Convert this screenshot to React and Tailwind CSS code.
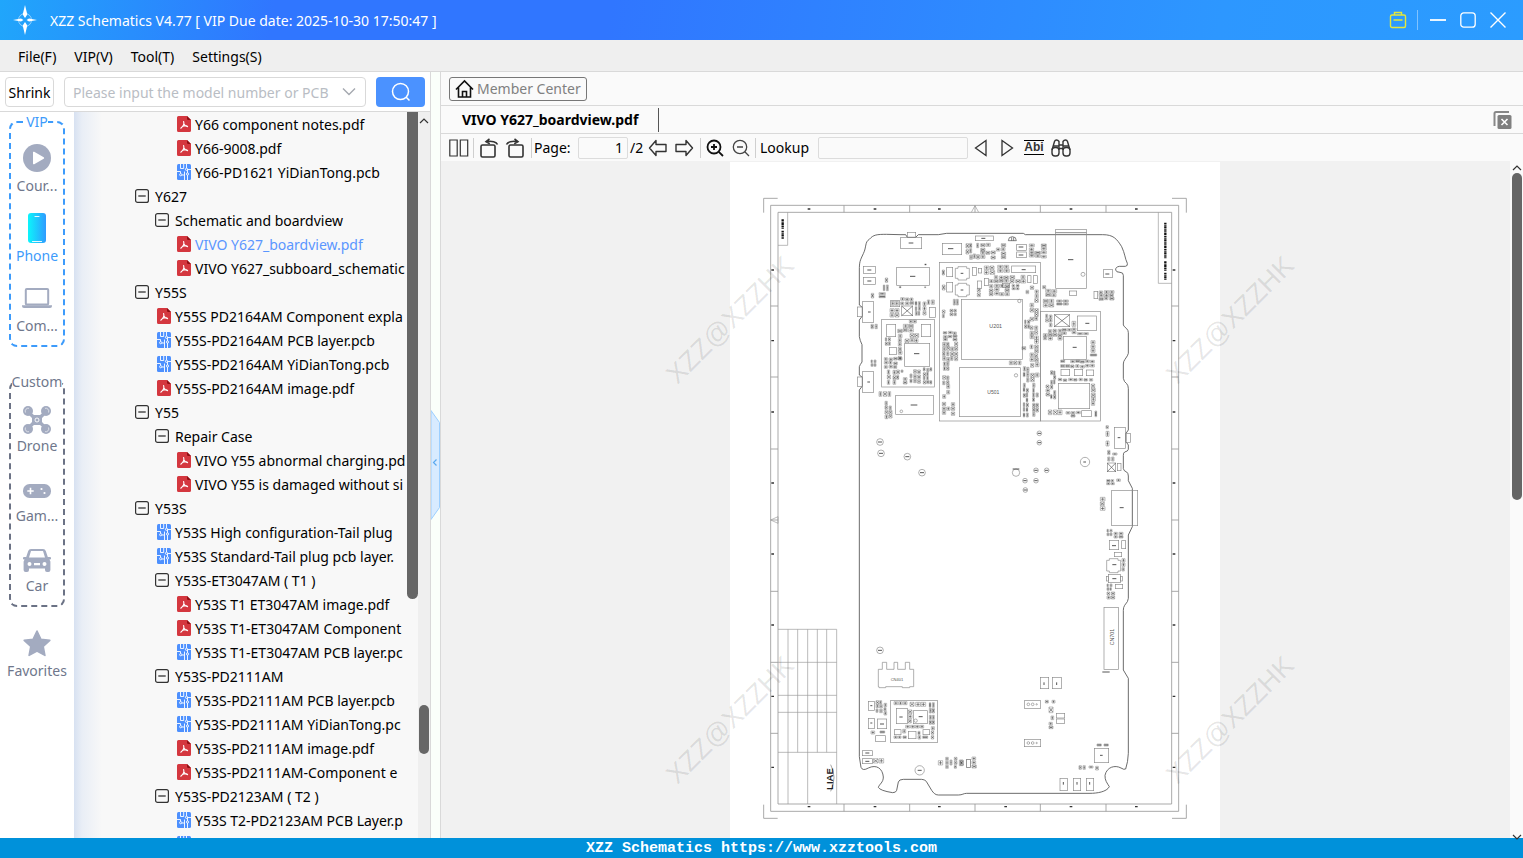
import { useState } from "react";

const menus = ["File(F)", "VIP(V)", "Tool(T)", "Settings(S)"];

// t: "dir" folder, "pdf" or "pcb" file. l: depth in the tree
const rows = [
  { t: "pdf", l: 3, name: "Y66 component notes.pdf" },
  { t: "pdf", l: 3, name: "Y66-9008.pdf" },
  { t: "pcb", l: 3, name: "Y66-PD1621 YiDianTong.pcb" },
  { t: "dir", l: 1, name: "Y627" },
  { t: "dir", l: 2, name: "Schematic and boardview" },
  { t: "pdf", l: 3, name: "VIVO Y627_boardview.pdf" },
  { t: "pdf", l: 3, name: "VIVO Y627_subboard_schematic" },
  { t: "dir", l: 1, name: "Y55S" },
  { t: "pdf", l: 2, name: "Y55S PD2164AM Component expla" },
  { t: "pcb", l: 2, name: "Y55S-PD2164AM PCB layer.pcb" },
  { t: "pcb", l: 2, name: "Y55S-PD2164AM YiDianTong.pcb" },
  { t: "pdf", l: 2, name: "Y55S-PD2164AM image.pdf" },
  { t: "dir", l: 1, name: "Y55" },
  { t: "dir", l: 2, name: "Repair Case" },
  { t: "pdf", l: 3, name: "VIVO Y55 abnormal charging.pd" },
  { t: "pdf", l: 3, name: "VIVO Y55 is damaged without si" },
  { t: "dir", l: 1, name: "Y53S" },
  { t: "pcb", l: 2, name: "Y53S High configuration-Tail plug" },
  { t: "pcb", l: 2, name: "Y53S Standard-Tail plug pcb layer." },
  { t: "dir", l: 2, name: "Y53S-ET3047AM ( T1 )" },
  { t: "pdf", l: 3, name: "Y53S T1 ET3047AM image.pdf" },
  { t: "pdf", l: 3, name: "Y53S T1-ET3047AM Component" },
  { t: "pcb", l: 3, name: "Y53S T1-ET3047AM PCB layer.pc" },
  { t: "dir", l: 2, name: "Y53S-PD2111AM" },
  { t: "pcb", l: 3, name: "Y53S-PD2111AM PCB layer.pcb" },
  { t: "pcb", l: 3, name: "Y53S-PD2111AM YiDianTong.pc" },
  { t: "pdf", l: 3, name: "Y53S-PD2111AM image.pdf" },
  { t: "pdf", l: 3, name: "Y53S-PD2111AM-Component e" },
  { t: "dir", l: 2, name: "Y53S-PD2123AM ( T2 )" },
  { t: "pcb", l: 3, name: "Y53S T2-PD2123AM PCB Layer.p" },
  { t: "pcb", l: 3, name: "" },
];

function PdfIcon() {
  return (
    <svg width="14" height="16" viewBox="0 0 14 16">
      <path d="M1.500 0H10l4 4v10.500a1.500 1.500 0 0 1-1.500 1.500h-11A1.500 1.500 0 0 1 0 14.500v-13A1.500 1.500 0 0 1 1.500 0z" fill="#d4373f" />
      <path d="M10 0l4 4h-2.800A1.200 1.200 0 0 1 10 2.800z" fill="#8f0f14" />
      <path d="M6.600 5.500c.8 2.200.4 4.200-2.800 6.700M6.900 8c.8 1.500 1.700 2.200 3.700 2.600M5.300 10.500c1.700-.8 2.800-.9 4.600-.6" fill="none" stroke="#fff" strokeWidth="1.100" strokeLinecap="round" />
    </svg>
  );
}

function PcbIcon() {
  return (
    <svg width="14" height="16" viewBox="0 0 14 16">
      <rect width="14" height="16" rx="1.500" fill="#4d90fe" />
      <g fill="none" stroke="#fff" strokeWidth=".9">
        <path d="M3.500 0v4.500h3.200V0M9.500 0v4M0 7.500h3.500v2M14 5.500h-3.300M5 11h2.500V7.500M7.500 16V11M10.500 16v-5M10.500 9V5.500" />
        <circle cx="9.500" cy="5.300" r="1.100" />
        <circle cx="3.700" cy="10.700" r="1.100" />
        <circle cx="10.500" cy="10" r="1.100" />
      </g>
    </svg>
  );
}

function MinusBox() {
  return (
    <svg width="14" height="14" viewBox="0 0 14 14" fill="none" stroke="#333">
      <rect x=".6" y=".6" width="12.800" height="12.800" rx="2" strokeWidth="1.200" />
      <path d="M3.300 7h7.400" strokeWidth="1.300" />
    </svg>
  );
}

function TreeRow({ row, active, onPick }) {
  const pad = { 1: "pl-[61px]", 2: "pl-[81px]", 3: "pl-[101px]" }[row.l];
  return (
    <li className="h-6 shrink-0">
      <button
        type="button"
        aria-label={row.name || "File"}
        onClick={onPick}
        className={`flex h-6 items-center whitespace-nowrap ${pad} ${active ? "text-[#5b96ff]" : "text-black"}`}
      >
        <span className={`w-5 shrink-0 ${row.t === "dir" ? "" : "pl-0.5"}`}>
          {row.t === "dir" && <MinusBox />}
          {row.t === "pdf" && <PdfIcon />}
          {row.t === "pcb" && <PcbIcon />}
        </span>
        <span className="pt-0.5">{row.name}</span>
      </button>
    </li>
  );
}

const catIcons = {
  course: (
    <svg width="28" height="28" viewBox="0 0 28 28">
      <circle cx="14" cy="14" r="14" fill="#a3abc0" />
      <path d="M10 8.500v11a.8.8 0 0 0 1.200.7l9.500-5.500a.8.8 0 0 0 0-1.400l-9.500-5.500a.8.8 0 0 0-1.200.7z" fill="#fff" />
    </svg>
  ),
  phone: (
    <svg width="18" height="30" viewBox="0 0 18 30">
      <defs>
        <linearGradient id="ph" x1="0" x2="1">
          <stop offset="0" stopColor="#0cf5fb" />
          <stop offset="1" stopColor="#2f9bff" />
        </linearGradient>
      </defs>
      <rect width="18" height="30" rx="3" fill="url(#ph)" />
      <path d="M7 3.500h4M4.500 28.500h9" stroke="#fff" strokeWidth="1.200" strokeLinecap="round" opacity=".9" />
    </svg>
  ),
  computer: (
    <svg width="30" height="20" viewBox="0 0 30 20">
      <rect x="3.800" y="1" width="22.400" height="15.500" rx="1" fill="none" stroke="#a3abc0" strokeWidth="2" />
      <path d="M0 17.200h30v.8a2 2 0 0 1-2 2H2a2 2 0 0 1-2-2z" fill="#a3abc0" />
    </svg>
  ),
  drone: (
    <svg width="28" height="28" viewBox="0 0 28 28">
      <g fill="#a3abc0">
        <circle cx="5" cy="5" r="5" />
        <circle cx="23" cy="5" r="5" />
        <circle cx="5" cy="23" r="5" />
        <circle cx="23" cy="23" r="5" />
        <path d="M5 4l6 5h6l6-5 2 2-6 6v4l6 6-2 2-6-5h-6l-6 5-2-2 6-6v-4L3 6z" />
      </g>
      <g fill="none" stroke="#fff" strokeWidth=".6">
        <path d="M2.500 6.500A3 3 0 0 1 6 2.300M25.500 6.500A3 3 0 0 0 22 2.300M2.500 21.500A3 3 0 0 0 6 25.700M25.500 21.500A3 3 0 0 1 22 25.700" />
      </g>
      <circle cx="14" cy="14" r="2" fill="none" stroke="#fff" strokeWidth=".9" />
    </svg>
  ),
  game: (
    <svg width="28" height="16" viewBox="0 0 28 16">
      <rect y="2" width="28" height="14" rx="6.500" fill="#a3abc0" />
      <path d="M7.500 5.800v6.400M4.300 9h6.400" stroke="#fff" strokeWidth="1.600" />
      <circle cx="18.500" cy="7" r="1.100" fill="#fff" />
      <circle cx="21.500" cy="11" r="1.100" fill="#fff" />
    </svg>
  ),
  car: (
    <svg width="28" height="23" viewBox="0 0 28 23">
      <path
        fillRule="evenodd"
        fill="#a3abc0"
        d="M8 0h12a3 3 0 0 1 2.800 2l2 6H27a1 1 0 0 1 0 2.500h-.6l1 2V21a2 2 0 0 1-2 2H24a2 2 0 0 1-2-2v-1.500H6V21a2 2 0 0 1-2 2H2.600a2 2 0 0 1-2-2v-8.500l1-2H1A1 1 0 0 1 1 8h2.200l2-6A3 3 0 0 1 8 0zM8 2L6 8.500h16L20 2zM6.500 13a2 2 0 1 0 0 4 2 2 0 0 0 0-4zm15 0a2 2 0 1 0 0 4 2 2 0 0 0 0-4zM11 14v2.300h6V14z"
      />
    </svg>
  ),
  star: (
    <svg width="28" height="27" viewBox="0 0 28 27">
      <path
        d="M14 1l3.800 8.200 9 1.100-6.600 6.200 1.700 8.900L14 21.100l-7.900 4.300 1.700-8.900-6.600-6.200 9-1.100z"
        fill="#a3abc0"
        stroke="#a3abc0"
        strokeWidth="1.600"
        strokeLinejoin="round"
      />
    </svg>
  ),
};

function Category({ icon, label, active, tight }) {
  return (
    <button type="button" className={`flex w-full flex-col items-center ${active ? "text-[#3d9bfb]" : "text-[#6f778c]"}`}>
      <span className="flex h-7 items-center justify-center">{catIcons[icon]}</span>
      <span className={`leading-5 ${tight ? "mt-0.5" : "mt-1"}`}>{label}</span>
    </button>
  );
}

// Sheet is drawn with three units to the pixel
const chipAreas = [
  // left block
  [0, 84, [
    [466, 264, 12, 16], [460, 285, 18, 20], [424, 310, 12, 17], [447, 308, 22, 18], [556, 333, 18, 46], [579, 336, 12, 42],
    [592, 330, 24, 16], [480, 356, 30, 28], [484, 334, 24, 15], [512, 322, 42, 22], [423, 403, 24, 16], [423, 510, 18, 22], [503, 402, 50, 26],
    [538, 390, 24, 12], [505, 430, 14, 80], [525, 430, 44, 28], [466, 443, 18, 26], [463, 502, 56, 34],
    [472, 540, 12, 46], [489, 540, 22, 46], [513, 540, 11, 10], [520, 563, 14, 22], [540, 538, 34, 42],
    [580, 532, 30, 50], [447, 605, 40, 17], [465, 632, 24, 54], [508, 290, 8, 6], [584, 222, 8, 6], [584, 290, 8, 6],
  ]],
  // top and middle shields
  [600, 174, [
    [108, 70, 42, 48], [152, 70, 78, 46], [298, 70, 54, 44], [37, 150, 11, 18], [37, 195, 11, 18], [163, 138, 34, 28],
    [203, 136, 38, 24], [178, 166, 60, 24], [240, 164, 50, 26], [142, 205, 12, 28], [178, 192, 62, 36], [246, 194, 26, 18],
    [288, 196, 40, 38], [300, 236, 28, 190], [284, 300, 18, 28], [276, 380, 16, 12], [302, 428, 28, 60], [238, 423, 40, 14], [280, 440, 20, 48],
    [280, 488, 18, 104], [308, 488, 20, 104], [70, 238, 18, 20], [60, 268, 24, 22], [37, 270, 11, 26], [40, 334, 44, 30], [38, 364, 48, 60],
    [40, 426, 20, 28], [38, 467, 24, 68], [37, 546, 40, 40], [338, 197, 12, 12], [347, 208, 54, 24], [340, 238, 36, 26], [380, 240, 38, 18],
    [507, 210, 48, 32], [347, 283, 22, 38], [340, 326, 58, 36], [397, 324, 44, 20], [426, 304, 14, 18], [442, 338, 38, 9],
    [483, 362, 15, 38], [481, 402, 22, 9], [392, 420, 104, 10], [392, 433, 104, 11], [385, 474, 108, 10], [362, 450, 18, 88],
    [348, 495, 14, 36], [484, 490, 15, 68], [355, 570, 44, 17], [408, 573, 46, 20], [495, 573, 8, 20],
  ]],
  // right edge
  [690, 744, [
    [438, 47, 12, 12], [438, 64, 12, 18], [438, 93, 12, 18], [443, 121, 12, 16], [458, 129, 16, 9], [443, 141, 24, 15],
    [440, 209, 26, 18], [470, 207, 16, 10], [421, 262, 17, 42], [441, 358, 18, 22], [462, 367, 30, 20], [486, 446, 12, 40],
    [441, 522, 18, 22], [441, 546, 26, 24],
  ]],
  // bottom left
  [0, 1344, [
    [438, 270, 22, 50], [462, 280, 11, 38], [423, 363, 16, 12], [450, 363, 17, 9], [492, 275, 42, 12], [540, 277, 50, 15],
    [598, 278, 18, 34], [598, 316, 18, 30], [604, 350, 12, 40], [535, 300, 14, 42], [527, 346, 58, 11], [492, 378, 40, 10],
    [518, 358, 12, 14], [564, 364, 11, 26], [578, 378, 20, 10], [430, 446, 34, 16], [625, 452, 18, 16], [647, 442, 11, 36],
    [660, 450, 11, 18], [673, 442, 11, 36], [688, 450, 14, 20],
  ]],
  // bottom right
  [690, 1464, [
    [256, 151, 14, 11], [276, 151, 12, 11], [267, 171, 15, 20], [273, 198, 11, 14], [267, 217, 15, 22], [411, 282, 16, 9],
    [432, 282, 16, 9], [357, 347, 24, 14], [387, 348, 15, 9], [407, 349, 11, 14], [0, 331, 13, 18], [36, 321, 16, 36],
  ]],
];

function buildChips() {
  let seed = 7;
  const rnd = () => {
    seed = (seed * 16807) % 2147483647;
    return seed / 2147483647;
  };
  let frames = "";
  let fills = "";
  chipAreas.forEach(([ox, oy, areas]) => {
    areas.forEach(([ax, ay, w, h]) => {
      const tall = w < h;
      const cw = tall ? 12 : 16;
      const ch = tall ? 14 : 12;
      const nx = Math.max(1, Math.round(w / cw));
      const ny = Math.max(1, Math.round(h / ch));
      for (let i = 0; i < nx; i++) {
        for (let j = 0; j < ny; j++) {
          if (nx * ny > 5 && rnd() < 0.2) continue;
          const shrink = rnd() < 0.35 ? 5 : 3;
          const bw = Math.round(w / nx) - shrink;
          const bh = Math.round(h / ny) - 3;
          const jit = nx * ny > 4 ? Math.round(rnd() * 3) : 0;
          const x = Math.round(ox + ax + (i * w) / nx);
          const y = Math.round(oy + ay + (j * h) / ny) + jit;
          frames += `M${x} ${y}h${bw}v${bh}h${-bw}z`;
          if (rnd() < 0.6) fills += `M${x + 2} ${y + bh / 2}h${bw - 4}M${x + bw / 2} ${y + 1}v${bh - 2}`;
          else fills += `M${x + 1} ${y + 2}l${bw - 2} ${bh - 4}M${x + 1} ${y + bh - 2}l${bw - 2} ${4 - bh}`;
        }
      }
    });
  });
  return { frames, fills };
}

const chips = buildChips();

// bigger parts: x, y, w, h
const parts = [
  [0, 84, [
    [400, 229, 36, 21], [400, 262, 36, 21], [500, 232, 98, 54], [512, 142, 63, 34], [532, 127, 25, 15], [637, 160, 58, 34],
    [397, 335, 34, 62], [382, 351, 15, 29], [397, 545, 34, 62], [382, 561, 15, 28], [481, 332, 28, 18], [515, 348, 33, 29],
    [598, 352, 18, 30], [455, 388, 158, 203], [470, 403, 27, 37], [574, 403, 28, 37], [478, 472, 21, 22], [524, 460, 75, 69],
    [497, 616, 113, 57],
  ]],
  [600, 174, [
    [136, 48, 54, 14], [260, 73, 29, 18], [260, 96, 29, 17], [28, 127, 303, 476], [331, 274, 180, 329], [94, 238, 183, 180],
    [88, 443, 183, 147], [50, 142, 18, 28], [50, 187, 18, 29], [127, 142, 12, 24], [145, 145, 10, 14], [245, 138, 72, 20],
    [142, 183, 13, 22], [163, 175, 12, 22], [217, 190, 22, 12], [293, 167, 10, 21], [310, 167, 12, 23], [377, 28, 92, 177],
    [418, 213, 22, 13], [520, 149, 28, 23], [492, 214, 11, 22], [373, 284, 46, 36], [442, 288, 57, 44], [400, 349, 69, 69],
    [393, 448, 26, 19], [433, 448, 25, 19], [469, 450, 22, 17], [385, 490, 94, 76], [455, 572, 29, 18],
  ]],
  [690, 744, [
    [463, 52, 33, 63], [497, 70, 14, 27], [442, 159, 25, 26], [472, 160, 11, 22], [455, 241, 78, 106], [448, 391, 28, 28],
    [485, 392, 12, 24], [463, 427, 22, 13], [445, 493, 36, 25], [439, 499, 6, 14], [481, 499, 6, 14], [466, 523, 22, 13],
    [432, 592, 43, 186],
  ]],
  [0, 1344, [
    [415, 274, 18, 27], [415, 325, 18, 31], [442, 327, 28, 29], [437, 377, 29, 18], [482, 271, 140, 127], [499, 295, 33, 46],
    [550, 302, 42, 39], [493, 359, 20, 15], [535, 364, 23, 22], [579, 359, 20, 15], [397, 422, 30, 15], [397, 446, 30, 15],
    [710, 448, 11, 24],
  ]],
  [690, 1464, [
    [241, 82, 25, 34], [277, 82, 27, 34], [193, 152, 49, 23], [193, 268, 49, 22], [289, 190, 25, 14], [289, 207, 25, 13],
    [403, 295, 43, 43], [300, 385, 22, 37], [340, 385, 22, 37], [379, 385, 22, 37], [19, 328, 12, 24],
  ]],
];

const pads = [
  [928, 814, 7], [928, 842, 7], [918, 925, 7], [950, 925, 7], [885, 956, 7], [918, 956, 7], [886, 984, 7],
  [1065, 900, 14], [858, 932, 11], [450, 840, 10], [453, 874, 10], [532, 884, 10], [576, 932, 10], [450, 1465, 10], [569, 1825, 14],
];

const outline =
  "M388 324C388 300 390 296 400 275C410 255 404 240 418 232C430 218 440 217 470 217L510 218H527L532 226H557L565 218H625L650 214H880L886 218H1118C1150 218 1160 230 1175 254C1185 275 1185 290 1192 304Q1194 312 1186 313H1168Q1156 315 1157 324Q1158 331 1170 331Q1180 331 1180 340V489Q1182 494 1190 500Q1195 505 1195 512V574Q1194 580 1185 592Q1180 598 1180 606V649Q1182 660 1190 665Q1195 670 1195 680V804L1188 814V839L1195 849V862Q1194 868 1184 870Q1180 872 1180 880V920Q1182 928 1190 930Q1195 934 1195 942V956L1207 979V1094L1195 1119V1309Q1195 1318 1184 1330Q1180 1336 1180 1345V1524L1195 1549V1774Q1194 1800 1187 1821Q1182 1824 1173 1818C1155 1808 1130 1815 1125 1840C1124 1855 1132 1864 1138 1874C1130 1890 1100 1894 1080 1894H710C700 1894 698 1899 685 1899H625C615 1899 610 1892 605 1885L590 1860Q586 1852 575 1852H520Q507 1852 505 1860L500 1885Q498 1892 488 1892Q450 1886 445 1876C448 1866 460 1862 460 1845C458 1820 440 1806 415 1818Q398 1828 393 1816L388 1784V684L397 672V646L388 639V614Q390 608 396 600V548Q390 536 388 524V474L397 462V436L388 429Z";

function Sheet() {
  const xt = [342, 539, 735, 931, 1128];
  const yt = [432, 645, 861, 1074, 1288, 1501, 1714];
  const xl = [237, 435, 628, 827, 1023, 1219];
  const yl = [324, 536, 750, 963, 1176, 1389, 1603, 1816];
  return (
    <svg className="block" width="490" height="676" viewBox="0 0 1470 2028" fill="none" fontFamily="Liberation Sans, sans-serif">
      <g stroke="#999" strokeWidth="2.500">
        <path d="M101 152v-43h42M1326 109h43v43M101 1928v41h42M1326 1969h43v-41" />
        <path d="M122 130H1346V1948H122zM144 151H1325V1926H144z" />
        {xt.map((x) => (
          <path key={x} d={`M${x} 130v21M${x} 1926v22`} />
        ))}
        {yt.map((y) => (
          <path key={y} d={`M122 ${y}h22M1325 ${y}h21`} />
        ))}
        <path d="M724 151l11-20 11 20M122 1074l22-10v20zM173 151V250H144M1285 151V364H1325" strokeWidth="2" />
        <path d="M144 1402H320V1926M144 1501H320M144 1600H320M144 1651H320M144 1771H320M174 1402V1926M203 1402V1771M233 1402V1926M262 1402V1771M290 1402V1771" strokeWidth="2" />
      </g>
      <g fill="#333">
        {xl.map((x) => (
          <path key={x} d={`M${x - 4} 139h8v4h-8zM${x - 4} 1932h8v4h-8z`} />
        ))}
        {yl.map((y) => (
          <path key={y} d={`M124 ${y - 2}h8v4h-8zM1328 ${y - 2}h8v4h-8z`} />
        ))}
      </g>
      <path d="M158 172V200M158 206V230M1306 182V290M1306 298V326M1306 332V354" stroke="#111" strokeWidth="7" strokeDasharray="5 1.500 3 1 7 2" />
      <path d="M302 1808Q322 1845 302 1888" stroke="#777" strokeWidth="2" />
      <text transform="translate(309 1884) rotate(-90)" fontSize="29" fontWeight="bold" fill="#222">LIAE</text>

      <path d={outline} stroke="#555" strokeWidth="2.600" />
      <g stroke="#8a8a8a" strokeWidth="2">
        {parts.map(([ox, oy, list]) =>
          list.map(([x, y, w, h]) => <rect key={`${ox}-${x}-${y}`} x={ox + x} y={oy + y} width={w} height={h} />)
        )}
        {pads.map(([x, y, r]) => (
          <circle key={`${x}-${y}`} cx={x} cy={y} r={r} />
        ))}
        <path d="M684 314h26v5h8v30h-8v5h-26v-5h-8v-30h8zM684 364h26v5h8v30h-8v5h-26v-5h-8v-30h8zM1138 1190h26v5h8v32h-8v5h-26v-5h-8v-32h8z" />
        <path d="M445 1522h12v-21h13v21h22v-21h11v21h23v-21h13v21h12v52h-12v3h-22v-3h-50v3h-20v-3h-2z" />
        <path d="M977 212h92M973 458l46 36M1019 458l-46 36M515 432l33 29M548 432l-33 29M1132 903l25 26M1157 903l-25 26" stroke="#555" />
        <path d="M835 236a12 12 0 0 1 24 0zM845 226v10M851 226v10" stroke="#444" />
        <circle cx="868" cy="417" r="5" />
        <circle cx="858" cy="640" r="5" />
        <circle cx="1059" cy="337" r="6" />
        <circle cx="514" cy="748" r="4" />
        <circle cx="557" cy="1676" r="5" />
        {[1627, 1743].map((y) => (
          <g key={y}>
            <circle cx="895" cy={y} r="4" />
            <circle cx="908" cy={y} r="4" />
            <circle cx="920" cy={y} r="2" />
          </g>
        ))}
      </g>
      <path d={chips.frames} stroke="#888" strokeWidth="1.600" />
      <path d={chips.fills} stroke="#333" strokeWidth="1.600" />
      {/* part marks */}
      <path
        d="M412 324h12M412 357h12M540 343h16M536 243h14M654 260h16M414 450h8M412 660h8M552 575h16M542 729h20M692 334h8M692 384h8M875 323h12M1014 293h16M1126 336h12M1066 484h12M1028 556h12M1163 827h8M1169 1037h12M1146 1151h12M1147 1208h12M1147 1250h12M1060 900h8M848 921h20M444 840h12M447 874h12M526 884h12M570 932h12M444 1465h12M563 1825h12M508 1665h10M566 1664h12M421 1631h6M421 1683h6M450 1686h12M406 1773h12M406 1798h12M942 1561v8M980 1561v8M1110 1780h8M1000 1860v8M1041 1860v8M1079 1860v8M866 255h14M866 279h14M754 229h12M1117 1530h22M923 814h10M923 842h10M913 925h10M945 925h10M880 956h10M913 956h10M881 984h10"
        stroke="#555"
        strokeWidth="3"
      />
      <g fill="#555">
        <text x="778" y="498" fontSize="16">U201</text>
        <text x="772" y="696" fontSize="15">U501</text>
        <text x="482" y="1556" fontSize="12">CN401</text>
        <text transform="translate(1152 1450) rotate(-90)" fontSize="16">CN701</text>
      </g>
    </svg>
  );
}

function Watermark({ place }) {
  return (
    <div className={`pointer-events-none absolute -translate-x-1/2 -translate-y-1/2 -rotate-45 font-[Liberation_Sans,sans-serif] text-[27px] leading-7 text-black/10 ${place}`}>
      XZZ@XZZHK
    </div>
  );
}

function ToolButton({ label, width, children }) {
  return (
    <button type="button" aria-label={label} className={`flex h-6 shrink-0 items-center justify-center ${width}`}>
      {children}
    </button>
  );
}

function Sep() {
  return <span className="h-5 w-px shrink-0 bg-[#cfcfcf]" />;
}

function Toolbar() {
  return (
    <div className="flex h-[27px] shrink-0 items-center bg-[#fafafa] pl-2 text-black">
      <ToolButton label="Two pages" width="w-5">
        <svg width="20" height="18" viewBox="0 0 20 18" fill="none" stroke="#333" strokeWidth="1.200">
          <path d="M.8 1h7.400v16H.8zM11.300 1h7.400v16h-7.400z" />
        </svg>
      </ToolButton>
      <span className="w-1" />
      <Sep />
      <span className="w-0.5" />
      <ToolButton label="Rotate left" width="w-[26px]">
        <svg width="20" height="20" viewBox="0 0 20 20" fill="none" stroke="#333" strokeWidth="1.600">
          <rect x="2" y="7" width="14" height="12" rx="1.500" />
          <path d="M18.500 6.500C17.500 4 13 2.500 7.500 3.500M10.500.8L7 3.600l3.800 2.200" />
        </svg>
      </ToolButton>
      <ToolButton label="Rotate right" width="w-[26px]">
        <svg width="20" height="20" viewBox="0 0 20 20" fill="none" stroke="#333" strokeWidth="1.600">
          <rect x="4" y="7" width="14" height="12" rx="1.500" />
          <path d="M1.500 6.500C2.500 4 7 2.500 12.500 3.500M9.500.8L13 3.600 9.200 5.800" />
        </svg>
      </ToolButton>
      <span className="w-[3px]" />
      <Sep />
      <label htmlFor="page" className="w-[46px] shrink-0 pl-0.5">Page:</label>
      <input id="page" defaultValue="1" className="h-[22px] w-[50px] shrink-0 rounded-xs border border-[#dcdcdc] bg-[#fafafa] pr-1 text-right outline-none" />
      <span className="w-5 shrink-0 pl-0.5">/2</span>
      <ToolButton label="Previous page" width="w-5">
        <svg width="20" height="18" viewBox="0 0 20 18" fill="none" stroke="#333" strokeWidth="1.400" strokeLinejoin="round">
          <path d="M1.500 9L8 1.500v4h10v7H8v4z" />
        </svg>
      </ToolButton>
      <span className="w-1.5" />
      <ToolButton label="Next page" width="w-5">
        <svg width="20" height="18" viewBox="0 0 20 18" fill="none" stroke="#333" strokeWidth="1.400" strokeLinejoin="round">
          <path d="M18.500 9L12 1.500v4H2v7h10v4z" />
        </svg>
      </ToolButton>
      <span className="w-1.5" />
      <Sep />
      <span className="w-1" />
      <ToolButton label="Zoom in" width="w-5">
        <svg width="18" height="18" viewBox="0 0 18 18" fill="none" stroke="#111" strokeWidth="1.800">
          <circle cx="8" cy="8" r="6.500" />
          <path d="M5 8h6M8 5v6M12.800 12.800L17 17" />
        </svg>
      </ToolButton>
      <span className="w-1.5" />
      <ToolButton label="Zoom out" width="w-5">
        <svg width="18" height="18" viewBox="0 0 18 18" fill="none" stroke="#444" strokeWidth="1.300">
          <circle cx="8" cy="8" r="6.700" />
          <path d="M5 8h6M12.800 12.800L17 17" />
        </svg>
      </ToolButton>
      <span className="w-1" />
      <Sep />
      <label htmlFor="lookup" className="w-[62px] shrink-0 pl-1">Lookup</label>
      <input id="lookup" className="h-[22px] w-[150px] shrink-0 rounded-xs border border-[#dcdcdc] bg-[#fafafa] px-1 outline-none" />
      <ToolButton label="Find previous" width="w-[26px]">
        <svg width="14" height="18" viewBox="0 0 14 18" fill="none" stroke="#333" strokeWidth="1.300">
          <path d="M12 1.500v15L1.500 9z" />
        </svg>
      </ToolButton>
      <ToolButton label="Find next" width="w-[26px]">
        <svg width="14" height="18" viewBox="0 0 14 18" fill="none" stroke="#333" strokeWidth="1.300">
          <path d="M2 1.500v15L12.500 9z" />
        </svg>
      </ToolButton>
      <ToolButton label="Match case" width="w-7">
        <span className="border-y border-black font-[Liberation_Sans,sans-serif] text-[12px] leading-[13px] font-bold text-[#333]">Abi</span>
      </ToolButton>
      <ToolButton label="Find" width="w-[26px]">
        <svg width="20" height="18" viewBox="0 0 20 18" fill="none" stroke="#333" strokeWidth="1.400">
          <path d="M1 11L3.500 2.500Q4 1 5.500 1T8 2.500V11M19 11l-2.500-8.500Q16 1 14.500 1T12 2.500V11M8 6h4M8 9.500h4M2.500 7H8M12 7h5.500" />
          <rect x="1" y="8.500" width="7" height="8.500" rx="3" />
          <rect x="12" y="8.500" width="7" height="8.500" rx="3" />
        </svg>
      </ToolButton>
    </div>
  );
}

function Chevron({ className }) {
  return (
    <svg className={className} width="10" height="6" viewBox="0 0 10 6" fill="none" stroke="#333" strokeWidth="1.200">
      <path d="M1 5l4-4 4 4" />
    </svg>
  );
}

export default function App() {
  const [picked, setPicked] = useState("VIVO Y627_boardview.pdf");

  return (
    <div className="flex h-screen flex-col overflow-hidden bg-[#f0f0f0] font-['Noto_Sans',sans-serif] text-[14px] leading-5">
      {/* title bar */}
      <header className="flex h-10 shrink-0 items-center bg-[linear-gradient(100deg,#20a6fb_0%,#3076ff_18%,#3076ff_40%,#2d97ff_80%,#2b9cff_100%)] pr-[15px] pl-3 text-white">
        <svg width="26" height="30" viewBox="0 0 26 30">
          <circle cx="13" cy="15" r="6.500" fill="none" stroke="#fff" strokeWidth="1" opacity=".5" />
          <path d="M13 0l2.300 9.500L13 13l-2.300-3.500zM13 30l2.300-9.500L13 17l-2.300 3.500zM1 15l8-1.500 2.500 1.500L9 16.500zM25 15l-8-1.500-2.500 1.500 2.500 1.500z" fill="#fff" />
        </svg>
        <h1 className="ml-3 pt-0.5 whitespace-nowrap">XZZ Schematics V4.77 [ VIP Due date: 2025-10-30 17:50:47 ]</h1>
        <div className="ml-auto flex items-center">
          <button type="button" aria-label="Toolbox">
            <svg width="18" height="18" viewBox="0 0 18 18" fill="none" stroke="#e4e83c" strokeWidth="1.400">
              <rect x="1.500" y="4" width="15" height="12.500" rx="1.500" />
              <path d="M5.500 4V1.500h7V4M4.500 9h9" />
            </svg>
          </button>
          <span className="mx-2.5 h-5 w-px bg-white/40" />
          <button type="button" aria-label="Minimize" className="flex w-5 justify-center">
            <svg width="16" height="16" viewBox="0 0 16 16" stroke="#fff" strokeWidth="1.800">
              <path d="M0 8h16" />
            </svg>
          </button>
          <button type="button" aria-label="Maximize" className="ml-2.5 flex w-5 justify-center">
            <svg width="16" height="16" viewBox="0 0 16 16" fill="none" stroke="#fff" strokeWidth="1.300">
              <rect x=".8" y=".8" width="14.400" height="14.400" rx="3" />
            </svg>
          </button>
          <button type="button" aria-label="Close" className="ml-2.5 flex w-5 justify-center">
            <svg width="16" height="16" viewBox="0 0 16 16" stroke="#fff" strokeWidth="1.400">
              <path d="M.5.5l15 15M15.500.5l-15 15" />
            </svg>
          </button>
        </div>
      </header>

      <nav className="flex h-8 shrink-0 items-center gap-[18px] border-b border-[#d9d9d9] bg-[#efefef] pt-0.5 pl-[18px] text-black">
        {menus.map((m) => (
          <button key={m} type="button">{m}</button>
        ))}
      </nav>

      <div className="flex min-h-0 flex-1">
        {/* left panel */}
        <aside className="flex w-[431px] shrink-0 flex-col border-r border-[#d9d9d9] bg-white">
          <div className="flex h-10 shrink-0 items-center border-b border-[#d9d9d9] pl-[5px]">
            <button type="button" className="h-[30px] w-[49px] shrink-0 rounded border border-[#d9d9d9] pt-0.5 text-black">Shrink</button>
            <div className="ml-2.5 flex h-[30px] w-[302px] items-center rounded border border-[#d9d9d9] pr-[9px] pl-2">
              <input
                aria-label="Model number"
                placeholder="Please input the model number or PCB"
                className="min-w-0 flex-1 pt-0.5 outline-none placeholder:text-[#b9bdc4]"
              />
              <svg width="14" height="10" viewBox="0 0 14 10" fill="none" stroke="#a5a9b0" strokeWidth="1.400">
                <path d="M1 1.500l6 6 6-6" />
              </svg>
            </div>
            <button type="button" aria-label="Search" className="ml-2.5 flex h-[30px] w-[49px] items-center justify-center rounded-sm bg-[#4b92ff]">
              <svg width="20" height="20" viewBox="0 0 20 20" fill="none" stroke="#fff" strokeWidth="1.500">
                <circle cx="9.500" cy="9.500" r="8" />
                <path d="M15 15l3.500 3.500" />
              </svg>
            </button>
          </div>

          <div className="flex min-h-0 flex-1">
            <div className="flex w-[74px] shrink-0 flex-col items-center">
              <fieldset className="w-14 rounded-lg border-2 border-dashed border-[#3d9bfb] pb-[9px]">
                <legend className="mx-auto text-[#3d9bfb]">VIP</legend>
                <div className="flex flex-col gap-[18px] pt-3">
                  <Category icon="course" label="Cour..." />
                  <Category icon="phone" label="Phone" active />
                  <Category icon="computer" label="Com..." />
                </div>
              </fieldset>
              <fieldset className="mt-[25px] w-14 rounded-lg border-2 border-dashed border-[#6b7285] pb-[9px]">
                <legend className="mx-auto text-[#6f778c]">Custom</legend>
                <div className="flex flex-col gap-5 pt-3.5">
                  <Category icon="drone" label="Drone" tight />
                  <Category icon="game" label="Gam..." tight />
                  <Category icon="car" label="Car" tight />
                </div>
              </fieldset>
              <div className="mt-[22px] w-full">
                <Category icon="star" label="Favorites" />
              </div>
            </div>

            <ul className="flex min-w-0 flex-1 flex-col overflow-hidden bg-[linear-gradient(90deg,#d7e1f1_0px,#e9eef6_8px,#f8f8f8_28px)]">
              {rows.map((r, i) => (
                <TreeRow key={i} row={r} active={r.name === picked} onPick={() => setPicked(r.name)} />
              ))}
            </ul>
            <div className="w-[11px] shrink-0 bg-[#f8f8f8]">
              <div className="h-[487px] rounded-b-md bg-[#666]" />
            </div>
            <div className="flex w-3 shrink-0 flex-col items-center bg-[#efefef] pt-1.5">
              <Chevron />
              <div className="mt-[581px] h-[49px] w-2.5 rounded-full bg-[#666]" />
            </div>
          </div>
        </aside>

        {/* splitter */}
        <div className="flex w-2.5 shrink-0 items-center border-r border-[#d9d9d9] bg-[#fafffa] pt-5">
          <button type="button" aria-label="Collapse panel">
            <svg width="9" height="110" viewBox="0 0 9 110">
              <path d="M0 .5L8.500 12.500v85L0 109.500z" fill="#d8ebff" stroke="#9ccfff" />
              <path d="M5.500 49.500l-3 3 3 3" fill="none" stroke="#5ba9ef" strokeWidth="1.200" />
            </svg>
          </button>
        </div>

        {/* document side */}
        <main className="flex min-w-0 flex-1 flex-col">
          <div className="flex h-[34px] shrink-0 items-center border-b border-[#d9d9d9] bg-[#fafafa] pl-2">
            <button type="button" className="flex h-6 items-center gap-[3px] rounded-[3px] border border-[#777] px-[5px] text-[#808080]">
              <svg width="19" height="19" viewBox="0 0 19 19" fill="none" stroke="#111" strokeWidth="1.600">
                <path d="M1 10.500L9.500 2 18 10.500M3.500 8.500V18h12V8.500M7.500 18v-5.500h4V18" />
              </svg>
              Member Center
            </button>
          </div>
          <div className="flex h-7 shrink-0 items-center justify-between border-b border-[#d9d9d9] bg-[#fafafa] pr-[11px]">
            <button type="button" className="h-6 border-r border-[#555] pr-5 pl-[21px] font-bold text-black">VIVO Y627_boardview.pdf</button>
            <button type="button" aria-label="Close all tabs">
              <svg width="19" height="18" viewBox="0 0 19 18">
                <path d="M1.500 15V2.500q0-1.500 1.500-1.500H16" fill="none" stroke="#888" strokeWidth="2" />
                <rect x="4.500" y="4" width="14" height="14" rx="1.500" fill="#808080" />
                <path d="M8.500 8l6 6M14.500 8l-6 6" stroke="#fff" strokeWidth="1.600" />
              </svg>
            </button>
          </div>
          <Toolbar />
          <div className="flex min-h-0 flex-1 bg-[#f1f1f1]">
            <div className="flex min-w-0 flex-1 justify-center overflow-hidden pt-px pr-0.5">
              <div className="relative w-[490px] shrink-0 bg-white">
                <Sheet />
                <Watermark place="left-0 top-[158px]" />
                <Watermark place="left-[500px] top-[158px]" />
                <Watermark place="left-0 top-[558px]" />
                <Watermark place="left-[500px] top-[558px]" />
              </div>
            </div>
            <div className="flex w-[13px] shrink-0 flex-col items-center justify-between bg-[#fafafa] pt-1">
              <div className="flex flex-col items-center gap-0.5">
                <Chevron />
                <div className="h-[327px] w-2.5 rounded-full bg-[#666]" />
              </div>
              <Chevron className="-mb-0.5 rotate-180" />
            </div>
          </div>
        </main>
      </div>

      <footer className="h-5 shrink-0 bg-[#0091da] text-center font-[Liberation_Mono,monospace] text-[15px] leading-[22px] font-bold text-white">
        XZZ Schematics https://www.xzztools.com
      </footer>
    </div>
  );
}
